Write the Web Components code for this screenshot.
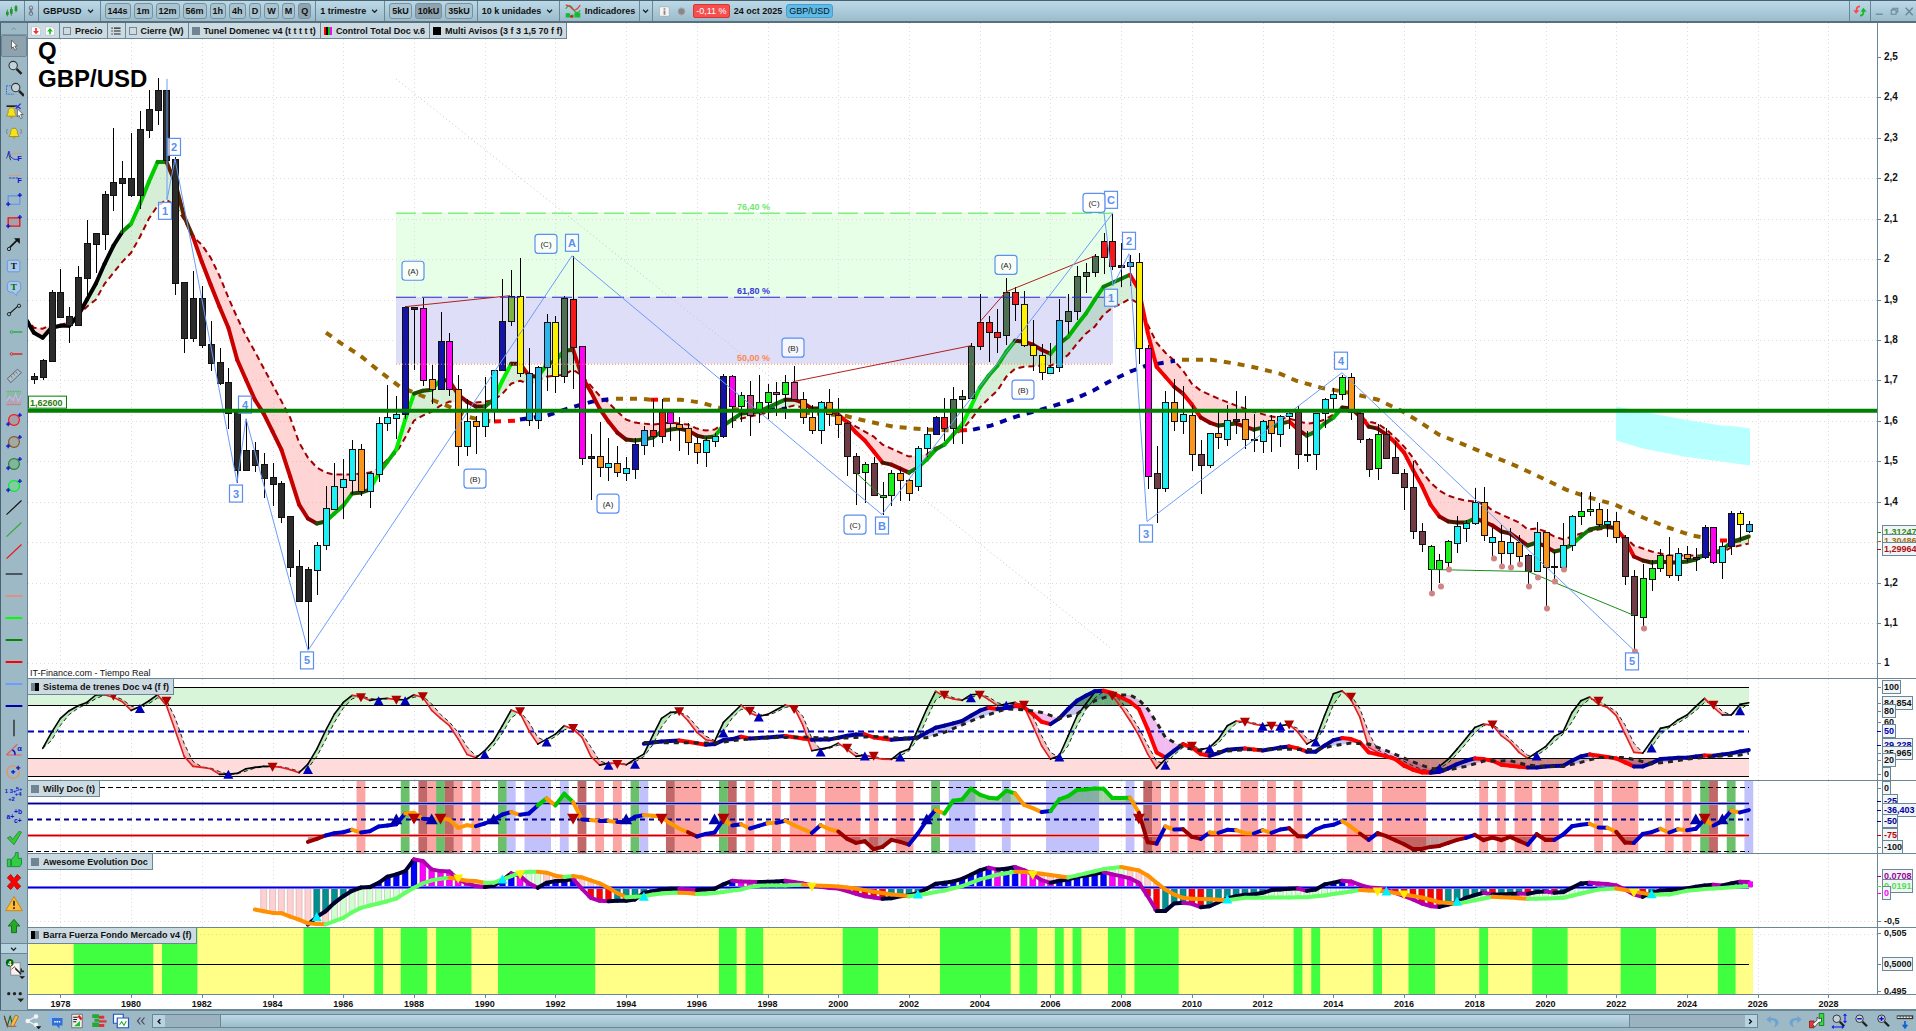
<!DOCTYPE html>
<html lang="es">
<head>
<meta charset="utf-8">
<title>GBP/USD - Q</title>
<style>
	html, body { height: 100%; margin: 0; }
	body {
		font: bold 9px/12px "Liberation Sans", Arial, sans-serif;
		color: #111;
		background: #9db9c6;
		overflow: hidden;
	}
</style>
</head>
<body>
<trade-workspace></trade-workspace>

<script>
// ---------- icons ----------
const magnifier = (x, y) => `<path d="M${x + 4} ${y + 4}l6 6" stroke="#222" stroke-width="3"/><circle cx="${x}" cy="${y}" r="5" fill="#c3d3db" stroke="#333" stroke-width="1.3"/>`;
const plus = (x, y) => `<path d="M${x - 2.5} ${y}h5M${x} ${y - 2.5}v5" stroke="#11c" stroke-width="1.5"/>`;
const ellipse = (c, f) => `<circle cx="12" cy="11" r="6.5" fill="${f}" stroke="${c}" stroke-width="1.4"/>${plus(19, 5)}${plus(5, 16)}`;
const slope = c => `<path d="M3 19L21 2" stroke="${c}" stroke-width="1.4"/>`;
const level = (c, w) => `<path d="M2 11H22" stroke="${c}" stroke-width="${w}"/>`;
const bell = `<path d="M12 4c-4 0-4 4-4 6l-2 4h12l-2-4c0-2 0-6-4-6z" fill="#f8e21c" stroke="#8a7a10" stroke-width=".8"/><path d="M10 15h4l-2 2z" fill="#b89c10"/>`;
const pointer = (x, y) => `<path d="M${x} ${y}v10l2-2 2 4 2-1-2-4h3z" fill="#fff" stroke="#555"/>`;

const ICONS = {
	cursor: pointer(9, 4),
	zoom: magnifier(11, 8),
	zoomArea: `<path d="M3 6h6M3 6v10h9" stroke="#16d" stroke-dasharray="2 1"/>${magnifier(14, 8)}`,
	alertDraw: `<path d="M3 4h11" stroke="#222" stroke-width="2"/><path d="M14 3l6 4M20 1l-6 6" stroke="#22c" stroke-width="1.4"/><g transform="translate(-3,2)">${bell}</g>${pointer(16, 7)}`,
	alert: `${bell}<path d="M4 5q-2 3 0 6M20 5q2 3 0 6" stroke="#777"/>`,
	fiboWave: `<path d="M5 7l3 9" stroke="#222"/><path d="M3 14l3-9 2 7 4 3h5" stroke="#22c"/><path d="M9 8h13" stroke="#f84" stroke-dasharray="2 1"/><text x="16" y="17" font-size="9" fill="#11c">F</text>`,
	fibo: `<path d="M6 8h14" stroke="#f84" stroke-dasharray="2 1"/><path d="M6 11h11" stroke="#22c" stroke-dasharray="3 1"/><text x="16" y="17" font-size="9" fill="#11c">F</text>`,
	rect: `<path d="M5 6h14v10H5z" stroke="#5b8ff0" stroke-width="1.3"/>${plus(19, 5)}${plus(5, 16)}`,
	rectRed: `<path d="M5 6h14v10H5z" fill="#a7a0a8" stroke="#e11" stroke-width="1.6"/>${plus(19, 5)}${plus(5, 16)}`,
	arrow: `<circle cx="6" cy="17" r="2" stroke="#111"/><path d="M7 15l9-9" stroke="#111" stroke-width="2"/><path d="M12 4h7v7z" fill="#111"/>`,
	text: `<rect x="4" y="4" width="15" height="14" rx="2" fill="#a9c9e4" stroke="#5b8ff0"/><text x="8" y="15" font-size="11" fill="#111" font-family="Liberation Serif">T</text>`,
	textBubble: `<path d="M8 3h8a4 4 0 0 1 4 4v5a5 5 0 0 1-4 4l-1 4-4-4H8a4 4 0 0 1-4-4V7a4 4 0 0 1 4-4z" fill="#a9c9e4" stroke="#5b8ff0"/><text x="8" y="14" font-size="11" fill="#060" font-family="Liberation Serif">T</text>`,
	segment: `<path d="M6 16L17 6" stroke="#111" stroke-width="1.4"/><circle cx="6" cy="16" r="2" fill="#9db9c6" stroke="#111"/><circle cx="18" cy="6" r="2" fill="#9db9c6" stroke="#111"/>`,
	rayGreen: `<circle cx="9" cy="11" r="1.6" stroke="#2a3"/><path d="M11 11h11" stroke="#2a3" stroke-width="1.6"/>`,
	rayRed: `<circle cx="9" cy="11" r="1.6" stroke="#e11"/><path d="M11 11h11" stroke="#e11" stroke-width="1.6"/>`,
	ruler: `<path d="M4 14L16 3l5 4L8 19z" fill="#b0bec5" stroke="#556"/><path d="M8 11l2 2M11 8l2 2M14 6l2 2" stroke="#556"/>`,
	channel: `<path d="M3 3h18v8H3z" fill="#8cb8a4"/><path d="M3 11h18v8H3z" fill="#b3a4b4"/><path d="M3 3h18" stroke="#4a4" stroke-dasharray="1 1"/><path d="M3 19h18" stroke="#d44" stroke-dasharray="1 1"/><path d="M3 15l4-6 4 5 3-8 3 9 4-8" stroke="#bbe" stroke-width="1.4"/>`,
	ellipseRed: ellipse('#f11', '#a7a0a8'),
	ellipseBrown: ellipse('#852', '#a3aaa4'),
	ellipseGreen: ellipse('#282', '#82b4a0'),
	ellipseLime: ellipse('#0e2', '#82cca4'),
	slopeBlack: slope('#111'), slopeGreen: slope('#3a3'), slopeRed: slope('#e11'),
	levelBlack: level('#111', 1.4), levelPink: level('#f08878', 2), levelLime: level('#0f0', 2.4), levelGreen: level('#080', 2.4),
	levelRed: level('#f00', 2.4), levelBlue: level('#6b9cff', 2.4), levelNavy: level('#00a', 2.4),
	vertical: `<path d="M12 1v20" stroke="#111" stroke-width="1.4"/>`,
	angle: `<path d="M3 17L16 4M3 17h18" stroke="#e55" stroke-width="1.3"/><path d="M10 11q4 2 3 6" stroke="#11c" stroke-width="1.8"/><text x="16" y="12" font-size="9" fill="#11c">α</text>`,
	circle: `<circle cx="11" cy="11" r="7.5" stroke="#f58a50" stroke-width="1.4"/>${plus(11, 11)}${plus(17, 6)}`,
	elliott5: `<path d="M3 14L8 5l3 12 5-14 4 7" stroke="#8ab4f8"/><text x="1" y="10" font-size="7" fill="#11c">1</text><text x="7" y="10" font-size="7" fill="#11c">3+</text><text x="14" y="7" font-size="7" fill="#11c">5+</text><text x="5" y="19" font-size="7" fill="#11c">+2</text><text x="13" y="14" font-size="7" fill="#11c">+4</text>`,
	elliott3: `<path d="M3 14L10 5l7 11" stroke="#8ab4f8"/><text x="3" y="15" font-size="8" fill="#11c">a+</text><text x="12" y="9" font-size="8" fill="#11c">+b</text><text x="12" y="19" font-size="8" fill="#11c">c+</text>`,
	check: `<path d="M4 11l4-2 2 4 8-10 3 1-9 15z" fill="#3c3" stroke="#283"/>`,
	thumb: `<path d="M4 10h4v9H4zM9 10l4-4 1-4h3v7h4v7l-2 3H9z" fill="#3c4" stroke="#183"/>`,
	cross: `<path d="M4 6l4-4 4 5 4-5 4 4-5 5 5 5-4 4-4-5-4 5-4-4 5-5z" fill="#f00" stroke="#a00"/>`,
	warn: `<path d="M12 2l10 17H2z" fill="#fb3" stroke="#c70"/><path d="M12 7v6M12 15v2" stroke="#222" stroke-width="2"/>`,
	up: `<path d="M12 3l7 8h-4v8H9v-8H5z" fill="#2a2" stroke="#161"/>`,
	down: `<path d="M9 17h6v5H9z" fill="#f00"/>`,
	config: `<path d="M8 5h10v13H8z" fill="#f4f4f4" stroke="#888"/><path d="M9 12l3-3 3 5" stroke="#c33"/><circle cx="7" cy="5" r="4" fill="#060"/><text x="5" y="8" font-size="7" fill="#fff">4</text><path d="M13 11l6 6M19 11v3h3" stroke="#222" stroke-width="1.6"/><path d="M17 19h6l-3 3z" fill="#111"/>`,
	more: `<g fill="#222"><circle cx="6" cy="8" r="1.7"/><circle cx="12" cy="8" r="1.7"/><circle cx="18" cy="8" r="1.7"/><path d="M15 13h7l-3.500 4z"/></g>`,
	draw: `<path d="M3 4l4 14 4-14 3 13" stroke="#262" stroke-width="1.5"/><path d="M3 7l5 11h11" stroke="#b22"/><path d="M12 15l6-12 4 2-6 12-4 2z" fill="#fb3" stroke="#863"/>`,
	share: `<path d="M5 11L16 5M5 11l11 6" stroke="#f4f4f4" stroke-width="1.6"/><g fill="#f4f4f4"><circle cx="5" cy="11" r="3"/><circle cx="16" cy="5" r="3"/><circle cx="16" cy="16" r="3"/></g><path d="M16 18h7l-3.500 4z" fill="#111"/>`,
	chat: `<path d="M3 2h13v9H8l-3 3v-3H3z" fill="#8db8e8"/><path d="M8 7h14v10h-4v4l-4-4H8z" fill="#2f6fd8"/><path d="M11 12h2M14 12h2M17 12h2" stroke="#fff" stroke-width="2"/>`,
	report: `<path d="M5 2h14v18H5z" fill="#eee" stroke="#555"/><path d="M7 6h6M7 9h5M7 12h4" stroke="#111" stroke-width="1.400"/><path d="M14 4l4 5" stroke="#e11" stroke-width="3"/><path d="M8 18l8-7v7z" fill="#2b3"/>`,
	depth: `<path d="M3 2h9v5H3zM6 8h6v4H6zM3 13h9v6H3z" fill="#2a3"/><path d="M12 4h7v4h-7zM12 10h10v3H12zM12 15h7v4h-7z" fill="#d33"/>`,
	windows: `<path d="M2 2h13v12H2z" fill="#fff" stroke="#25b" stroke-width="1.6"/><path d="M7 7h15v13H7z" fill="#fff" stroke="#25b" stroke-width="1.6"/><path d="M10 16l3-4 3 5 3-6" stroke="#2a3" stroke-width="1.400"/>`,
	undo: `<path d="M9 4L3 9l6 5v-4c6-1 8 4 4 10 9-4 9-13-4-13z" fill="#6fa3cf"/>`,
	redo: `<path d="M15 4l6 5-6 5v-4c-6-1-8 4-4 10-9-4-9-13 4-13z" fill="#6fa3cf"/>`,
	style: `<path d="M15 1h6v16h-6z" fill="#3d4" stroke="#161"/><path d="M2 11h6v9H2z" fill="#e33" stroke="#811"/><path d="M6 15l6-5V6l3 2 3-1v5l-4 1-5 6z" fill="#eee" stroke="#333"/>`,
	zoomFit: `${magnifier(9, 8)}<path d="M20 2v11M18 4l2-2 2 2M18 11l2 2 2-2M3 19h15M5 17l-2 2 2 2M16 17l2 2-2 2" stroke="#11e" stroke-width="1.4"/>`,
	zoomOut: `${magnifier(10, 8)}<path d="M7 8h6" stroke="#11c" stroke-width="2"/>`,
	zoomIn: `${magnifier(10, 8)}<path d="M7 8h6M10 5v6" stroke="#11c" stroke-width="2"/>`,
	rows: `<path d="M1 6h22" stroke="#333" stroke-width="5"/><path d="M2 6h20" stroke="#eee" stroke-width="2" stroke-dasharray="3 1"/><path d="M12 11v9M9 16l3 4 3-4" stroke="#16c" stroke-width="2.4"/>`,
	candles: `<path d="M5 9v10M11 5v13M18 2v11" stroke="#161"/><path d="M3 12h4v5H3zM9 8h4v7H9zM16 4h4v7h-4z" fill="#292"/>`,
	link: `<rect x="8" y="2" width="6" height="7" rx="2" stroke="#667" stroke-width="1.6"/><rect x="8" y="12" width="6" height="7" rx="2" stroke="#667" stroke-width="1.6"/><path d="M11 6v9" stroke="#667" stroke-width="2"/>`,
	waves: `<path d="M2 8q5-9 10 0t10 2" stroke="#2a3" stroke-width="1.6"/><path d="M2 3q5 0 9 5t11-5" stroke="#e33" stroke-width="1.6"/><path d="M2 14h6v6H2zM9 16h4v4H9zM14 13h8v7h-8z" fill="#1b3"/><path d="M8 17h4v3H8z" fill="#e11"/>`,
	sync: `<path d="M12 4q-6 0-5 7" stroke="#f44" stroke-width="2.6"/><path d="M2 10h9l-5 5z" fill="#f44"/><path d="M12 18q6 0 5-7" stroke="#1b2" stroke-width="2.6"/><path d="M13 12h9l-5-6z" fill="#1b2"/>`,
	minimize: `<path d="M5 16h13" stroke="#6b8795" stroke-width="2.4"/>`,
	restore: `<path d="M9 8V5h9v7h-3M6 8h9v8H6z" stroke="#6b8795" stroke-width="2"/>`,
	close: `<path d="M5 4l13 14M18 4L5 18" stroke="#6b8795" stroke-width="2.6"/>`,
	info: `<rect x="1" y="1" width="21" height="20" fill="#f4f4f4" stroke="#999"/><path d="M12 4v3M12 9v9" stroke="#888" stroke-width="4"/>`,
	dot: `<circle cx="12" cy="11" r="8" fill="#888" stroke="#b0b8bc" stroke-width="2"/>`,
	chevron: `<path d="M5 8l6 6 6-6" stroke="#222" stroke-width="3"/>`,
	chevronUp: `<path d="M6 13l5-5 5 5" stroke="#6b8795" stroke-width="2"/>`,
	left: `<path d="M14 6l-5 5 5 5" stroke="#111" stroke-width="3"/>`,
	right: `<path d="M9 6l5 5-5 5" stroke="#111" stroke-width="3"/>`,
	collapse: `<path d="M11 5l-5 6 5 6M18 5l-5 6 5 6" stroke="#445" stroke-width="2"/>`,
	list: `<path d="M1 4h3M1 11h3M1 18h3M7 4h16M7 11h16M7 18h16" stroke="#222" stroke-width="2.6"/>`,
	redDown: `<path d="M1 1h16l6 6v14H1z" fill="#fff" stroke="#89a"/><path d="M12 19l7-8h-5V4h-4v7H5z" fill="#e33"/>`,
	greenUp: `<path d="M1 1h16l6 6v14H1z" fill="#fff" stroke="#89a"/><path d="M12 4l7 8h-5v7h-4v-7H5z" fill="#2b2"/>`
};

class UiIcon extends HTMLElement {
	connectedCallback() {
		const root = this.shadowRoot || this.attachShadow({ mode: 'open' });
		root.innerHTML = `
			<style>
				:host { display: inline-flex; flex: none; width: var(--icon, 20px); height: var(--icon, 20px); }
				svg { width: 100%; height: 100%; font: bold 9px "Liberation Sans", Arial, sans-serif; }
			</style>
			<svg viewBox="0 0 24 22" fill="none" aria-hidden="true">${ICONS[this.getAttribute('name')] || ''}</svg>
		`;
	}
}
customElements.define('ui-icon', UiIcon);

// ---------- top bar ----------
class TopBar extends HTMLElement {
	constructor() {
		super();
		this.attachShadow({ mode: 'open' });
	}
	getStyles() {
		return `
			<style>
				:host {
					display: flex;
					flex: none;
					align-items: center;
					height: 23px;
					box-sizing: border-box;
					border-top: 1px solid #4a6270;
					border-bottom: 2px solid #56707d;
					background: linear-gradient(#bcd9e8, #9cbccb);
					--icon: 16px;
				}
				button {
					font: inherit;
					color: inherit;
					margin: 0;
					padding: 0;
					border: 0;
					background: none;
					display: flex;
					align-items: center;
					white-space: nowrap;
				}
				.group {
					display: flex;
					align-items: center;
					height: 100%;
					gap: 3px;
					padding: 0 4px;
					border-right: 1px solid #6b8795;
				}
				.key {
					height: 16px;
					padding: 0 2px;
					border: 1px solid #7592a0;
					border-radius: 3px;
					background: #a9c4d0;
				}
				.key.on { background: #8fa3ae; }
				.drop { gap: 4px; --icon: 10px; }
				.badge {
					padding: 0 2px;
					border: 1px solid #d33;
					border-radius: 2px;
					background: #f55050;
					color: #fff;
					font-weight: normal;
				}
				.pair {
					padding: 0 2px;
					border: 1px solid #4d9cc8;
					border-radius: 3px;
					background: #5cbbe8;
					font-weight: normal;
				}
				.status { display: flex; align-items: center; gap: 4px; padding: 0 6px; }
				.status ui-icon { --icon: 11px; margin-right: 2px; }
				.window { margin-left: auto; display: flex; align-items: center; height: 100%; gap: 2px; border-left: 1px solid #6b8795; }
				.window .group { padding: 0 2px; }
				.window > button { --icon: 13px; }
			</style>
		`;
	}
	connectedCallback() {
		const keys = (list, on) => list.map(k => `<button class="key${k === on ? ' on' : ''}">${k}</button>`).join('');
		this.shadowRoot.innerHTML = `
			${this.getStyles()}
			<div class="group"><button aria-label="Velas"><ui-icon name="candles"></ui-icon></button></div>
			<div class="group" style="padding:0"><button aria-label="Vincular"><ui-icon name="link" style="width:13px"></ui-icon></button></div>
			<div class="group"><button class="drop">GBPUSD <ui-icon name="chevron"></ui-icon></button></div>
			<div class="group">${keys(['144s', '1m', '12m', '56m', '1h', '4h', 'D', 'W', 'M', 'Q'], 'Q')}</div>
			<div class="group"><button class="drop">1 trimestre <ui-icon name="chevron"></ui-icon></button></div>
			<div class="group">${keys(['5kU', '10kU', '35kU'], '10kU')}</div>
			<div class="group"><button class="drop">10 k unidades <ui-icon name="chevron"></ui-icon></button></div>
			<div class="group"><button><ui-icon name="waves" style="width:18px"></ui-icon>&nbsp;Indicadores</button></div>
			<div class="group" style="padding:0 1px"><button class="drop" aria-label="Más indicadores"><ui-icon name="chevron"></ui-icon></button></div>
			<div class="status">
				<ui-icon name="info"></ui-icon><ui-icon name="dot"></ui-icon>
				<span class="badge">-0,11 %</span><span>24 oct 2025</span><span class="pair">GBP/USD</span>
			</div>
			<div class="window">
				<div class="group"><button aria-label="Sincronizar"><ui-icon name="sync"></ui-icon></button></div>
				<button aria-label="Minimizar"><ui-icon name="minimize"></ui-icon></button>
				<button aria-label="Restaurar"><ui-icon name="restore"></ui-icon></button>
				<button aria-label="Cerrar"><ui-icon name="close"></ui-icon></button>
			</div>
		`;
	}
}
customElements.define('top-bar', TopBar);

// ---------- drawing tools on the left ----------
const TOOLS = ['cursor', 'zoom', 'zoomArea', 'alertDraw', 'alert', 'fiboWave', 'fibo', 'rect', 'rectRed', 'arrow', 'text', 'textBubble',
	'segment', 'rayGreen', 'rayRed', 'ruler', 'channel', 'ellipseRed', 'ellipseBrown', 'ellipseGreen', 'ellipseLime', 'slopeBlack',
	'slopeGreen', 'slopeRed', 'levelBlack', 'levelPink', 'levelLime', 'levelGreen', 'levelRed', 'levelBlue', 'levelNavy', 'vertical',
	'angle', 'circle', 'elliott5', 'elliott3', 'check', 'thumb', 'cross', 'warn', 'up', 'down'];

class ToolRail extends HTMLElement {
	connectedCallback() {
		this.attachShadow({ mode: 'open' }).innerHTML = `
			<style>
				:host {
					display: flex;
					flex-direction: column;
					width: 28px;
					box-sizing: border-box;
					border-left: 1px solid #4a6270;
					border-right: 1px solid #6b8795;
					background: #9db9c6;
				}
				button {
					flex: none;
					margin: 0;
					padding: 0;
					border: 0;
					background: none;
					display: flex;
					align-items: center;
					justify-content: center;
					width: 100%;
				}
				.fold { height: 12px; border-bottom: 1px solid #7b98a6; --icon: 10px; }
				.tools { flex: 1; min-height: 0; overflow: hidden; }
				.tools button { height: 22px; box-sizing: border-box; }
				.tools button:first-child { border: 1px solid #6b8795; border-radius: 2px; background: #8fa3ae; }
				.next { height: 11px; background: #b7d3e0; border: solid #6b8795; border-width: 1px 0; box-sizing: border-box; --icon: 10px; }
				.big { height: 28px; --icon: 23px; }
			</style>
			<button class="fold" aria-label="Plegar"><ui-icon name="chevronUp"></ui-icon></button>
			<div class="tools">${TOOLS.map(t => `<button aria-label="${t}"><ui-icon name="${t}"></ui-icon></button>`).join('')}</div>
			<button class="next" aria-label="Siguiente"><ui-icon name="chevron"></ui-icon></button>
			<button class="big" aria-label="Configurar"><ui-icon name="config"></ui-icon></button>
			<button class="big" aria-label="Más"><ui-icon name="more"></ui-icon></button>
		`;
	}
}
customElements.define('tool-rail', ToolRail);

// ---------- bottom bar ----------
class BottomBar extends HTMLElement {
	connectedCallback() {
		const btn = n => `<button aria-label="${n}"><ui-icon name="${n}"></ui-icon></button>`;
		this.attachShadow({ mode: 'open' }).innerHTML = `
			<style>
				:host { display: flex; flex: none; align-items: center; height: 21px; background: #9db9c6; border-top: 1px solid #6b8795; box-sizing: border-box; --icon: 18px; }
				button { flex: none; box-sizing: border-box; width: 22px; height: 20px; margin: 0; padding: 0; border: 0; background: none; display: flex; align-items: center; justify-content: center; }
				button:first-child { width: 28px; background: #8fa3ae; }
				.fold { width: 18px; margin-right: 2px; --icon: 14px; }
				.scroll { flex: 1; display: flex; height: 12px; margin-right: 4px; border: 1px solid #6b8795; --icon: 11px; }
				.scroll button, .scroll button:first-child { width: 12px; height: 100%; background: #b7d3e0; }
				.scroll span { background: #9bb3c0; }
				.scroll .thumb { background: linear-gradient(#bcd9e8, #9cbccb); border: solid #6b8795; border-width: 0 1px; }
			</style>
			${['draw', 'share', 'chat', 'report', 'depth', 'windows'].map(btn).join('')}
			<button class="fold" aria-label="Plegar"><ui-icon name="collapse"></ui-icon></button>
			<div class="scroll">
				${btn('left')}
				<span style="flex:55"></span><span class="thumb" style="flex:1420"></span><span style="flex:116"></span>
				${btn('right')}
			</div>
			${['undo', 'redo', 'style', 'zoomFit', 'zoomOut', 'zoomIn', 'rows'].map(btn).join('')}
		`;
	}
}
customElements.define('bottom-bar', BottomBar);

// ---------- data ----------
// one candle a quarter, first one is three quarters before 1978: colour, high, open/close top, open/close bottom, low
const CANDLES = `
k373,376,379,384 k359,360,377,380 k290,292,361,361
k269,292,317,318 k307,316,325,343 k266,277,325,325 k220,243,278,302
k233,233,244,273 k191,194,234,250 k128,182,195,211 k161,178,183,235
k133,178,195,197 k111,129,195,209 k90,109,130,138 k78,90,110,125
k90,90,160,161 k157,159,283,295 k282,282,338,353 k271,298,338,342
k286,298,345,348 k321,344,363,371 k348,362,383,385 k368,382,413,429
k412,412,470,483 k419,450,470,470 k442,450,465,472 k453,464,478,498
k463,477,484,506 k481,483,517,523 k516,516,568,578 k550,567,602,603
k568,570,602,650 c542,545,571,596 c486,508,545,550 c463,486,509,509
c459,479,487,519 c440,449,480,494 o444,449,491,496 c472,473,491,508
c417,423,474,482 c385,417,423,431 c396,414,418,439 b306,307,414,419
k307,307,309,370 m298,308,380,386 o365,379,389,404 b312,341,389,389
m333,341,389,396 o375,389,446,466 c399,421,446,456 o416,421,426,454
c377,411,426,437 c370,370,411,422 b279,321,370,370 n270,296,321,326
y258,296,373,377 s348,373,420,426 s366,367,420,429 s314,322,367,391
y316,322,376,393 d296,298,376,383 r256,299,347,389 m346,346,458,465
k434,456,458,500 o422,456,467,477 c438,463,467,481 o446,463,472,477
c457,468,473,481 b438,444,469,479 s426,430,445,455 r399,430,436,447
r399,412,436,443 m412,412,423,441 o417,424,428,451 o423,428,442,455
o437,443,452,464 c437,440,452,467 c433,436,441,447 b374,376,436,438
m375,376,406,428 g392,395,406,422 p381,395,415,436 g375,402,412,423
g384,392,402,419 p382,392,394,416 g375,382,394,419 p366,382,399,400
o392,399,417,424 o405,417,430,434 c401,402,430,444 o389,402,414,426
o398,415,424,438 w422,423,456,476 w453,456,473,505 g462,464,472,503
w457,463,495,496 g482,495,497,515 g470,473,495,506 o468,473,480,501
o479,480,493,501 c446,448,486,491 c427,434,448,457 b416,417,434,434
r398,417,428,441 d387,399,428,444 d390,396,399,444 d343,346,398,398
r294,322,346,350 r316,322,332,362 r309,332,337,353 d278,292,335,345
r287,292,304,321 y291,304,345,347 y320,345,355,371 y344,355,372,380
c343,367,373,374 s299,320,367,372 d294,311,321,334 d266,276,311,320
d263,272,276,293 d254,256,272,277 r233,241,257,274 r213,241,266,270
k243,265,267,287 s255,262,266,286 y253,262,348,364 m345,348,476,489
w446,473,488,523 c391,402,488,492 o379,402,421,431 c386,414,421,434
o405,415,454,471 w440,454,465,494 c433,433,465,468 o412,433,437,449
c405,420,439,446 k391,419,421,434 o396,419,439,449 k414,439,440,452
c420,421,441,453 o415,420,433,452 c415,416,434,447 c412,413,416,429
w406,412,454,469 k431,454,455,462 c413,413,454,470 c398,399,413,428
c388,394,398,409 g375,377,394,400 o373,377,412,420 w411,413,439,443
w438,439,469,477 g424,434,468,480 w428,434,458,458 w441,457,473,474
w469,473,487,510 w461,487,531,539 w523,531,544,552 g545,546,570,592
g554,560,570,584 g540,541,562,570 c516,526,543,553 c520,523,528,542
c488,502,523,525 o487,502,535,541 c528,537,542,557 o525,541,553,566
c528,542,553,567 o535,542,556,563 w554,555,572,586 c522,532,572,573
o532,532,568,607 k552,567,568,581 c523,545,568,569 c515,516,545,551
g492,511,516,525 g492,509,511,516 o503,509,524,527 c509,521,524,537
o512,521,537,543 w535,537,577,586 w571,577,616,651 g565,579,618,627
g560,569,580,592 g549,555,569,573 o537,555,576,579 c548,553,576,582
o546,554,558,563 k548,557,559,572 b525,527,557,559 m527,527,563,565
c542,546,563,580 b511,513,546,555 y511,513,524,540 s521,524,531,533`
	.trim().split(/\s+/).map(t => [t[0]].concat(t.slice(1).split(',').map(Number)));

const CANDLE_COLOURS = { k: '#2b2b2b', c: '#1ff0f5', o: '#f8961c', b: '#1414a8', m: '#ff00f0', n: '#7cb342', y: '#fff200', s: '#2db4ea',
	d: '#4f6f52', r: '#f51a1a', g: '#1af01a', p: '#cf4588', w: '#6f3b45' };

// "quarter:value" keys, missing quarters are filled in by interpolation
const series = text => {
	const keys = text.trim().split(/\s+/).map(t => t.split(':').map(Number));
	const out = [];
	for (let i = 0; i < keys.length - 1; i++) {
		const [a, va] = keys[i], [b, vb] = keys[i + 1];
		for (let q = a; q < b; q++) out.push([q, va + (vb - va) * (q - a) / (b - a)]);
	}
	out.push(keys[keys.length - 1]);
	return out;
};
// plain run of values, one for each quarter
const run = (from, text) => text.trim().split(/\s+/).map((v, i) => [from + i, Number(v)]);

const FAST = run(-4, `318 333 338 328 326 326 316 300 284 264 246 232 224 204 182 162 162 183 217 237 262 285 307 328 360 380 400 414 432 450
	477 505 519 524 522 514 506 494 493 490 474 462 450 420 394 391 390 380 381 395 402 407 407 400 381 364 364 376 377 365 361 351 350
	377 392 409 422 433 440 441 440 438 432 430 429 431 436 438 437 426 420 414 413 412 408 404 400 400 403 409 409 409 415 423 433 441
	452 463 465 469 473 468 460 450 445 435 425 407 388 376 366 352 341 342 345 350 354 344 337 325 314 300 287 283 279 275 290 333 367
	377 387 394 405 418 423 426 425 424 427 430 428 428 424 422 430 436 432 424 418 408 409 415 427 429 435 443 453 470 486 505 517 522
	523 523 519 522 526 532 534 540 546 543 547 552 550 545 537 530 528 527 529 540 557 561 563 562 563 563 562 560 555 554 550 543 540 537`);

const SLOW = series(`-4:318 -3:328 -2:329 -1:325 0:325 1:323 2:316 3:307 4:300 5:284 6:273 7:262 8:253 9:237 10:219 11:206 12:200 13:206 14:220
	15:237 16:245 17:258 18:276 19:298 20:318 21:336 22:352 24:385 26:418 27:443 28:458 29:468 30:473 31:475 33:475 35:473 36:469 37:460 38:453
	39:438 40:421 41:416 42:412 43:406 44:402 45:403 47:403 49:401 50:394 51:384 52:381 53:384 55:377 57:375 58:370 59:376 60:386 61:396 62:403
	63:412 64:420 65:423 67:425 69:423 71:425 72:429 73:431 74:430 75:424 76:421 78:417 80:413 82:408 83:406 84:408 86:412 88:416 89:421 90:427
	92:437 93:445 95:453 96:457 98:455 99:448 100:446 101:436 102:430 103:420 104:408 105:399 106:391 107:377 108:369 109:367 111:366 112:366
	113:362 114:355 115:344 116:334 117:327 118:315 119:308 120:304 121:299 122:304 123:325 124:343 125:353 126:361 127:371 128:384 129:391
	131:399 133:406 135:412 137:417 139:419 141:424 142:423 143:420 144:415 145:408 146:410 147:418 148:422 149:424 150:430 151:438 152:447
	153:458 154:472 155:483 156:491 157:496 158:499 159:501 160:502 161:504 162:511 163:515 165:523 166:530 167:529 168:532 169:537 170:540
	171:537 172:534 174:530 176:528 177:538 178:546 179:549 180:552 182:556 186:556 188:553 189:548 190:546 191:544`);

const LONG = [
	['#996600', '326,333 343,345 359,355 380,372 400,387 424,397 449,407 467,417 484,421 494,422'],
	['#f00', '494,422 516,421'],
	['#00009c', '520,420 547,416 571,408 592,402 612,399'],
	['#996600', '616,399 640,399 651,400'],
	['#f00', '651,400 660,400'],
	['#996600', '663,400 681,400 701,403 722,409 742,410'],
	['#00009c', '754,411 787,409'],
	['#996600', '803,413 820,414 844,416 869,422 893,427 926,430 960,431'],
	['#f00', '960,431 970,430'],
	['#00009c', '973,430 991,426 1016,417 1048,408 1073,400 1093,391 1109,382 1130,372 1146,366 1175,361'],
	['#996600', '1182,360 1211,360 1236,364 1256,368 1280,374 1296,381 1321,388 1349,393 1378,400 1403,412 1419,422 1439,435 1464,445 1488,455 1513,465 1537,476 1566,490 1586,497 1615,505 1643,518 1668,528 1692,536 1709,539'],
	['#f00', '1720,541 1732,541'],
	['#996600', '1734,541 1749,541']
];

const TRAIN = run(-2, `208 160 118 95 80 70 48 47 55 68 94 82 66 47 80 155 232 262 265 269 286 285 283 269 265 262 262 265 272 281 255 210 155
	105 70 49 52 64 60 58 62 62 47 55 94 118 140 180 226 236 215 185 140 93 103 155 195 180 165 140 150 175 232 258 252 253 257 240 225
	170 118 100 98 125 160 182 187 130 104 78 102 112 106 92 78 85 140 215 210 205 192 212 232 228 236 240 241 220 210 150 90 37 52 60
	64 47 45 62 80 75 70 82 140 200 240 230 170 110 75 40 35 50 85 125 170 225 268 240 215 195 205 212 205 180 140 126 128 135 140 138
	140 136 160 195 180 110 44 35 62 115 205 220 230 240 253 268 274 275 262 240 210 178 145 135 138 170 190 220 238 220 203 172 158
	100 65 54 76 85 110 165 220 222 185 148 142 122 108 82 58 85 108 108 76 71`);

const TREND = series(`66:194 68:187 70:184 71:188 73:197 74:195 75:183 76:180 77:173 78:178 80:175 82:171 84:178 85:182 87:181 88:176 89:170
	90:166 91:166 92:175 94:182 95:180 96:178 97:175 98:160 99:146 101:133 102:126 103:110 104:95 105:86 106:90 107:87 108:80 109:85 110:105
	111:128 112:135 113:118 114:90 115:65 116:50 117:37 118:35 119:42 120:55 121:68 122:90 123:150 124:220 125:235 126:215 127:195 128:205
	129:225 130:230 131:222 132:212 134:208 136:214 137:210 138:205 139:202 140:208 141:218 142:218 143:200 144:183 145:177 146:180 147:190
	148:220 149:226 150:232 151:240 152:260 153:272 154:280 155:281 156:278 157:268 158:255 159:245 160:238 161:240 162:245 163:257 164:260
	165:263 166:265 167:265 168:262 170:260 171:245 172:232 173:226 174:230 175:234 176:238 177:250 178:262 179:262 180:252 181:240 183:236
	184:236 185:232 186:229 187:230 188:226 189:223 190:217 191:213`);

const TREND_AVG = series(`66:190 74:192 77:182 80:176 84:174 88:178 92:172 95:177 98:176 100:160 104:115 107:90 109:92 111:100 113:118 115:105
	117:65 119:48 121:48 122:62 123:90 124:130 125:175 127:205 130:220 134:212 138:210 142:212 144:200 146:192 148:195 150:215 153:248 155:268
	157:272 159:262 161:246 164:245 166:258 168:262 170:262 172:250 174:235 177:235 180:254 182:248 184:240 187:232 190:228 191:222`);

// value and colour of the stretch that ends there
const WILLY = `487r 478r 468r 461b 458b 451b 459o 455b 441b 438b 434b 402b 400o 418o 420b 418o 420o 445o 437o 440o 432b 421b 405b 398b 406o 402b
	378b 357g 378o 343g 368g 420o 422b 425o 425b 428o 428b 412b 407b 409o 412o 432o 447o 458o 471r 463b 459b 420b 438o 434b 447o 439b 431b
	430o 424b 437o 449o 460o 437b 449o 456o 478r 490r 485r 509r 502r 481r 487r 495r 462b 423b 391b 402o 364g 360g 328g 346g 355g 357g 334g
	342g 376o 386o 398o 395b 360g 350g 332g 330g 327g 328g 356g 356g 355g 400o 488r 492r 441b 450o 449b 472r 478r 459b 460o 451b 452b 461o
	462o 452b 460o 450b 446b 470r 471r 450b 440b 436b 425b 442o 462o 481r 461b 470r 482r 494r 508r 508r 502r 499r 490r 481r 475r 466b 482r
	474r 482r 472r 484r 495r 464b 481r 481r 465b 440b 436b 433b 444o 445b 457o 489r 490r 463b 458b 448b 459o 449b 452o 448b 420b 438o 425b
	394b 399o 392b`.trim().split(/\s+/).map((t, i) => [28 + i, parseInt(t), t.slice(-1)]);

const WILLY_BANDS = [
	['#fca5a5', '34 42 45 47 61 63 70-72 78 81 83-85 87-90 92 95-96 124 126 128-129 131 134-135 137 140 146-148 150-154 161 163 165-166 168-169 174 176-178 182 184'],
	['#6bc06b', '39 43 50 65 75 99 186 189'],
	['#c26868', '41 44 59 69 76 123 187'],
	['#c1c1fb', '51 53-55 57 66 101-103 107 112-117 121 191']
];
const FORCE_BANDS = [['#40ff40', '2-10 12-15 28-30 36 39-41 43-46 50-60 75-76 78-79 89-92 100-107 109-110 113 115 119-120 122-126 140 142 149 153-155 161 167-170 177-180 188-189']];

const AO = run(28, `735 712 695 670 650 634 624 623 610 592 585 575 540 545 570 575 576 600 612 620 623 618 603 582 590 612 625 610 605 604
	598 628 655 664 665 664 664 660 640 636 630 628 628 630 632 630 628 615 604 606 607 608 607 606 604 608 612 617 622 626 627 635 643 650
	654 658 656 650 648 640 628 613 610 606 598 586 573 565 570 568 563 572 585 602 610 604 600 593 588 584 578 585 590 597 610 650 694 694
	672 670 673 683 680 668 657 650 646 645 640 632 630 628 627 634 630 615 610 604 606 616 624 626 630 640 650 660 672 680 682 675 668 655
	647 640 645 645 644 642 643 638 636 640 638 625 612 610 612 614 618 630 645 652 640 633 632 630 627 622 618 616 618 612 607 608`);

const AO_AVG = series(`22:690 23:695 24:700 25:701 26:711 27:720 28:731 29:733 30:734 31:725 32:715 33:698 34:685 35:678 36:672 37:665 38:657
	39:640 40:625 41:612 42:603 43:598 44:595 45:599 46:604 47:605 48:610 49:610 50:600 51:590 52:580 53:577 54:577 55:580 56:589 57:593 58:590
	59:594 60:603 61:612 62:625 63:641 64:653 65:652 66:650 67:645 68:642 69:641 70:640 71:641 72:644 73:643 75:638 76:633 77:630 78:623 79:619
	80:618 82:618 84:616 86:619 88:621 90:627 92:637 94:645 96:650 98:643 100:633 102:620 104:600 106:586 108:577 110:579 112:587 114:594
	116:582 118:569 120:563 122:573 123:588 124:610 125:630 126:645 127:655 128:658 130:659 132:662 134:655 139:654 141:653 143:648 145:640
	147:632 149:634 150:636 152:645 154:654 156:668 158:673 160:662 162:652 164:654 166:658 168:657 170:655 172:642 174:630 176:627 178:636
	180:646 182:645 184:634 186:629 188:626 190:621 191:620`);

// ---------- panes ----------
const AXIS = 39;
const GREY = '#6b8795';
const GRID = 'stroke="#dcdcdc" stroke-dasharray="1 3"';

class ChartPane extends HTMLElement {
	constructor() {
		super();
		this.attachShadow({ mode: 'open' });
		this.top = 0;
		this.bottom = 100;
		this.grow = 100;
	}
	connectedCallback() {
		this.shadowRoot.innerHTML = `
			<style>
				:host { display: block; position: relative; flex: ${this.grow} 1 0; min-height: 0; overflow: hidden; background: #fff; border-bottom: 1px solid ${GREY}; box-sizing: border-box; }
				svg { position: absolute; inset: 0; width: 100%; height: 100%; font: bold 9px "Liberation Sans", Arial, sans-serif; }
				.tabs { position: absolute; left: 0; top: 0; display: flex; background: #ccdae1; border: solid ${GREY}; border-width: 0 1px 1px 0; }
			</style>
			<svg></svg>
			<div class="tabs"><slot></slot></div>
		`;
		new ResizeObserver(() => this.render()).observe(this);
		this.render();
	}
	render() {
		const box = this.getBoundingClientRect();
		if (!box.width) return;
		this.plot = box.width - AXIS;
		this.sx = this.plot / 1849;
		this.sy = box.height / (this.bottom - this.top);
		this.shadowRoot.querySelector('svg').innerHTML = this.grid() + this.draw() + `<rect x="${this.plot}" y="0" width="${AXIS}" height="100%" fill="#fff"/><path d="M${this.plot + .5} 0V2000" stroke="${GREY}"/>` + this.axis();
	}
	// quarter, page and value coordinates
	qx(q) { return (32.4 + 8.84 * q) * this.sx; }
	px(x) { return (x - 28) * this.sx; }
	y(v) { return (v - this.top) * this.sy; }

	path(points, attrs) {
		return `<path fill="none" ${attrs} d="M${points.map(p => this.qx(p[0]).toFixed(1) + ' ' + this.y(p[1]).toFixed(1)).join('L')}"/>`;
	}
	poly(text, attrs) {
		return `<polyline fill="none" ${attrs} points="${text.split(' ').map(t => t.split(',')).map(p => this.px(p[0]).toFixed(1) + ',' + this.y(p[1]).toFixed(1)).join(' ')}"/>`;
	}
	hline(v, attrs, x2) {
		return `<path d="M0 ${Math.round(this.y(v)) + .5}H${x2 || this.px(1749)}" ${attrs}/>`;
	}
	// fills between two series, one quarter at a time, with a colour for each side
	between(a, b, above, below) {
		const other = new Map(b);
		let out = '';
		for (let i = 1; i < a.length; i++) {
			const [q0, a0] = a[i - 1], [q1, a1] = a[i];
			const b0 = other.get(q0), b1 = other.get(q1);
			if (b0 === undefined || b1 === undefined) continue;
			const fill = a0 + a1 < b0 + b1 ? above : below;
			out += `<path d="M${this.qx(q0).toFixed(1)} ${this.y(a0).toFixed(1)}L${this.qx(q1).toFixed(1)} ${this.y(a1).toFixed(1)}V${this.y(b1).toFixed(1)}L${this.qx(q0).toFixed(1)} ${this.y(b0).toFixed(1)}z" fill="${fill}"/>`;
		}
		return out;
	}
	segments(s, width, colour) {
		let out = '';
		for (let i = 1; i < s.length; i++) out += this.path([s[i - 1], s[i]], `stroke="${colour(s[i], s[i - 1], i)}" stroke-width="${width}" stroke-linecap="round"`);
		return out;
	}
	bands(list) {
		return list.map(([fill, text]) => text.split(' ').map(t => {
			const [a, b = a] = t.split('-').map(Number);
			return `<rect x="${this.qx(a - .5)}" y="0" width="${this.qx(b + .5) - this.qx(a - .5)}" height="100%" fill="${fill}"/>`;
		}).join('')).join('');
	}
	marks(text, fill, up, r) {
		return text.split(' ').map(t => {
			const [q, v] = t.split(',').map(Number);
			const x = this.qx(q), y = this.y(v), s = up ? 1 : -1;
			return `<path d="M${x - r} ${y + r * s * .8}h${2 * r}L${x} ${y - r * s}z" fill="${fill}"/>`;
		}).join('');
	}
	grid() {
		let out = '';
		for (let q = 0; q <= 200; q += 8) out += `<path d="M${Math.round(this.qx(q)) + .5} 0V2000" ${GRID}/>`;
		return out;
	}
	tag(v, text, colour, boxed) {
		const y = this.y(v), x = this.plot;
		const width = text.length * 5 + (text.includes(',') || text.includes('-') ? 0 : 3);
		return `<path d="M${x} ${Math.round(y) + .5}h4" stroke="${colour === '#111' ? GREY : colour}"/>` +
			(boxed ? `<rect x="${x + 5.5}" y="${Math.round(y) - 6.5}" width="${width}" height="13" fill="#f1f5f7" stroke="${GREY}"/>` : '') +
			`<text x="${x + 7}" y="${y + 3}" fill="${colour}">${text}</text>`;
	}
	draw() { return ''; }
	axis() { return ''; }
}

class PricePane extends ChartPane {
	constructor() {
		super();
		this.top = 23;
		this.bottom = 680;
		this.grow = 1977;
	}
	grid() {
		let out = super.grid();
		for (let i = 0; i < 15; i++) out += this.hline(664 - i * 40.46, GRID, this.plot);
		return out;
	}
	candle([c, high, top, bottom, low], i) {
		const x = Math.round(this.qx(i - 3)), y = v => Math.round(this.y(v));
		return `<path d="M${x + .5} ${y(high)}V${y(low)}" stroke="#000"/>` +
			`<rect x="${x - 2.5}" y="${y(top) + .5}" width="6" height="${Math.max(1, y(bottom) - y(top))}" fill="${CANDLE_COLOURS[c]}" stroke="#111"/>`;
	}
	label(x, y, text) {
		const small = text.length > 1;
		const w = small ? 22 : 13, h = small ? 19 : 17;
		return `<rect x="${this.px(x) - w / 2}" y="${this.y(y) - h / 2}" width="${w}" height="${h}" rx="${small ? 3 : 0}" fill="#fff" fill-opacity=".7" stroke="#5b8ff0" stroke-width="1.2"/>` +
			`<text x="${this.px(x)}" y="${this.y(y) + (small ? 3 : 4)}" text-anchor="middle" fill="${small ? '#222' : '#5b8ff0'}" font-size="${small ? 8 : 11}" font-weight="${small ? 400 : 700}">${text}</text>`;
	}
	maColour(a, b) {
		if (a[0] < 8) return '#000';
		const s = b[1] - a[1];
		if (a[0] < 13) return s > 14 ? '#00cc00' : '#009000';
		if (a[0] < 16) return '#5a2400';
		if (s > 14) return '#00f000';
		if (s > 7) return '#00b400';
		if (s > 3) return '#0a7a0a';
		if (s > 0) return '#1f4a00';
		if (s > -3) return '#451800';
		if (s > -8) return '#8a0000';
		if (s > -20) return a[0] > 120 || (a[0] > 88 && a[0] < 96) ? '#f00000' : '#b80000';
		return a[0] > 120 ? '#ff0000' : '#c80000';
	}
	draw() {
		const x1 = this.px(396), x2 = this.px(1113), fw = x2 - x1, y = v => this.y(v);
		const fib = `
			<rect x="${x1}" y="${y(213)}" width="${fw}" height="${y(297) - y(213)}" fill="#e7fee7"/>
			<rect x="${x1}" y="${y(297)}" width="${fw}" height="${y(364) - y(297)}" fill="#dedef8"/>`;
		const fibLines = `
			<path d="M${x1} ${y(213.5)}H${x2}" stroke="#7df07d" stroke-width="1.4" stroke-dasharray="20 6"/>
			<path d="M${x1} ${y(297.5)}H${x2}" stroke="#2a2ad0" stroke-width="1.2" stroke-dasharray="20 6"/>
			<path d="M${x1} ${y(364.5)}H${x2}" stroke="#ff7f40" stroke-dasharray="1 2"/>
			<text x="${this.px(737)}" y="${y(210)}" fill="#6fe86f">76,40 %</text>
			<text x="${this.px(737)}" y="${y(294)}" fill="#3a3ad8">61,80 %</text>
			<text x="${this.px(737)}" y="${y(361)}" fill="#ff8850">50,00 %</text>`;
		const dots = '1432,594 1441,587 1449,570 1494,559 1502,567 1511,568 1520,565 1529,587 1538,578 1547,609 1555,582 1564,570 1635,652 1644,629'
			.split(' ').map(t => t.split(',')).map(p => `<circle cx="${this.px(p[0])}" cy="${y(p[1])}" r="3" fill="#d08484"/>`).join('');
		const labels = [[174, 147, '2'], [165, 211, '1'], [236, 494, '3'], [245, 405, '4'], [307, 661, '5'], [572, 243, 'A'], [1111, 200, 'C'],
			[1129, 241, '2'], [1111, 298, '1'], [882, 526, 'B'], [1146, 534, '3'], [1341, 361, '4'], [1632, 662, '5'],
			[413, 271, '(A)'], [546, 244, '(C)'], [1006, 265, '(A)'], [1094, 203, '(C)'], [475, 479, '(B)'], [608, 504, '(A)'],
			[793, 348, '(B)'], [1023, 390, '(B)'], [855, 525, '(C)']].map(l => this.label(...l)).join('');
		const blue = 'stroke="#6b9cf8" stroke-width="1"';
		return fib + this.grid() +
			this.poly('396,79 1110,648', 'stroke="#c4c4c4" stroke-dasharray="1 3"') +
			this.poly('1616,407 1647,413 1684,420 1721,426 1737,427 1750,429 1750,466 1721,462 1684,457 1643,449 1616,441', 'style="fill:#b8ffff"') +
			this.between(FAST, SLOW, 'rgba(120,200,120,.3)', 'rgba(255,120,120,.32)') +
			this.path(SLOW, 'stroke="#a00000" stroke-width="2" stroke-dasharray="6 4"') +
			LONG.map(([c, p]) => this.poly(p, `stroke="${c}" stroke-width="4" stroke-dasharray="7 7"`)).join('') +
			this.segments(FAST, 4, (a, b) => this.maColour(a, b)) +
			CANDLES.map((c, i) => this.candle(c, i)).join('') +
			fibLines +
			this.poly('405,307 510,296', 'stroke="#b02020"') + this.poly('793,382 971,346', 'stroke="#b02020"') +
			this.poly('980,322 1006,292 1095,256', 'stroke="#b02020"') +
			this.poly('856,473 882,497', 'stroke="#189018"') + this.poly('1431,570 1528,572 1634,616', 'stroke="#189018"') +
			this.poly('167,79 167,200 175,159 237,483 246,419 308,651 572,256 882,515 1113,213', blue) +
			this.poly('1104,213 1113,286 1129,254 1147,522 1342,373 1634,651', blue) +
			dots + labels +
			`<path d="M0 ${y(411)}H${this.plot}" stroke="#007f00" stroke-width="4"/>
			<rect x=".5" y="${y(396) + .5}" width="38" height="12" fill="#fff" stroke="#007f00"/>
			<text x="2" y="${y(406)}" fill="#2c7a10">1,62600</text>
			<text x="10" y="${y(59)}" font-size="24" fill="#000">Q</text>
			<text x="10" y="${y(87)}" font-size="24" fill="#000">GBP/USD</text>
			<text x="2" y="${y(677)}" font-weight="400" fill="#111">IT-Finance.com - Tiempo Real</text>`;
	}
	axis() {
		let out = '';
		for (let i = 0; i <= 15; i++) {
			if (i === 3) continue;
			out += this.tag(664 - i * 40.46, String((10 + i) / 10).replace('.', ','), '#111');
		}
		return `<g font-size="10">${out}</g>` + this.tag(532, '1,31247', '#2c8a10', true) + this.tag(541, '1,30486', '#a07010', true) + this.tag(549, '1,29964', '#b01010', true);
	}
}
customElements.define('price-pane', PricePane);

class TrainPane extends ChartPane {
	constructor() {
		super();
		this.top = 0;
		this.bottom = 305;
		this.grow = 304;
	}
	draw() {
		const end = this.px(1749), y = v => this.y(v);
		const lagged = TRAIN.map((p, i) => [p[0], i ? (p[1] + TRAIN[i - 1][1]) / 2 : p[1]]);
		const over = (s, v, sign) => s.map(([q, n]) => [q, sign > 0 ? Math.max(n, v) : Math.min(n, v)]);
		const flat = (s, v) => s.map(([q]) => [q, v]);
		return `<rect y="${y(25)}" width="${end}" height="${y(79) - y(25)}" fill="#d9f5d9"/>
			<rect y="${y(238)}" width="${end}" height="${y(292) - y(238)}" fill="#ffdcdc"/>` +
			this.between(TREND, TREND_AVG, 'rgba(60,60,200,.3)', 'rgba(220,90,220,.4)') +
			this.between(over(TREND, 238, 1), flat(TREND, 238), 'none', 'rgba(150,50,40,.5)') +
			this.between(over(TREND, 79, -1), flat(TREND, 79), 'rgba(0,110,40,.5)', 'none') +
			this.between(TRAIN, lagged, 'rgba(70,200,70,.4)', 'rgba(230,70,70,.35)') +
			[25, 79, 238, 292].map(v => this.hline(v, 'stroke="#000"')).join('') +
			this.hline(157, 'stroke="#0000b8" stroke-width="2" stroke-dasharray="6 4"') +
			this.path(lagged, 'stroke="#222" stroke-dasharray="4 3"') +
			this.segments(TRAIN, 1.6, (a, b) => a[1] > b[1] ? '#e02020' : '#000') +
			this.segments(TREND, 4, (a, b) => a[1] > b[1] ? '#ff0000' : '#000098') +
			this.path(TREND_AVG, 'stroke="#222" stroke-width="3" stroke-dasharray="5 5"') +
			this.marks('6,50 12,65 24,263 34,55 38,62 41,52 52,97 58,147 63,255 70,97 78,95 83,90 89,206 92,230 100,47 104,47 109,77 119,50 128,200 134,128 137,140 139,136 146,53 162,136 174,65 187,77', '#b00000', false, 5) +
			this.marks('9,90 19,287 28,273 36,67 39,67 48,228 55,190 62,260 65,257 75,163 79,115 86,220 91,232 95,235 103,58 107,80 113,235 125,260 130,210 136,143 138,143 142,190 156,268 167,232 180,208 190,97', '#0000b8', true, 5);
	}
	axis() {
		const t = (v, s, c, b) => this.tag(v, s, c, b);
		return t(73, '84,854', '#111', true) + t(197, '29,228', '#0000a0', true) + t(223, '25,965', '#111', true) + t(25, '100', '#111', true) +
			t(95, '80', '#111', true) + t(128, '60', '#111') + t(157, '50', '#0000b8', true) + t(243, '20', '#111', true) + t(284, '0', '#111', true);
	}
}
customElements.define('train-pane', TrainPane);

class WillyPane extends ChartPane {
	constructor() {
		super();
		this.top = 305;
		this.bottom = 524;
		this.grow = 218;
	}
	draw() {
		const colours = { r: '#980000', b: '#0000c8', o: '#ff9800', g: '#00c800' };
		const line = WILLY.map(p => [p[0], p[1]]);
		const clamp = (v, f) => line.map(([q, n]) => [q, f(n, v)]);
		const flat = v => line.map(([q]) => [q, v]);
		return this.bands(WILLY_BANDS) +
			this.between(clamp(467, Math.max), flat(467), 'none', 'rgba(128,20,20,.45)') +
			this.between(clamp(371, Math.min), flat(371), 'rgba(60,150,60,.45)', 'none') +
			[322, 514].map(v => this.hline(v, 'stroke="#000" stroke-dasharray="5 3"')).join('') +
			this.hline(371, 'stroke="#8c8ce0" stroke-width="3"') + this.hline(371, 'stroke="#000080"') +
			this.hline(467, 'stroke="#ff8080" stroke-width="3"') + this.hline(467, 'stroke="#c00000"') +
			this.hline(419, 'stroke="#000090" stroke-width="2" stroke-dasharray="5 4"') +
			this.segments(line, 4, (a, b, i) => colours[WILLY[i][2]]) +
			this.marks('38,420 42,420 49,420 64,420 74,420 98,420 185,420 188,420', '#0000a8', true, 6) +
			this.marks('40,417 43,417 58,417 68,417 75,417 122,417 186,417', '#b00000', false, 6);
	}
	axis() {
		const t = (v, s, c) => this.tag(v, s, c, true);
		return t(364, '-25', '#000090') + t(391, '-36,403', '#0000a0') + t(326, '0', '#111') + t(424, '-50', '#000090') + t(467, '-75', '#c00000') + t(502, '-100', '#111');
	}
}
customElements.define('willy-pane', WillyPane);

class AwesomePane extends ChartPane {
	constructor() {
		super();
		this.top = 524;
		this.bottom = 743;
		this.grow = 218;
	}
	bars(s, colour, attrs) {
		return s.slice(1).map(([q, v], i) =>
			`<rect x="${this.qx(q) - 3}" y="${this.y(Math.min(v, 623))}" width="6" height="${Math.abs(this.y(v) - this.y(623))}" fill="${colour(v, v > s[i][1])}" ${attrs}/>`
		).join('');
	}
	draw() {
		return this.hline(723, GRID, this.plot) +
			this.bars(AO_AVG, (v, falling) => falling ? '#ffd0d0' : '#d0ffd0', 'stroke="#b09090" stroke-opacity=".4"') +
			this.bars(AO, (v, falling) => v < 623 ? (falling ? '#ff00ff' : '#0000ff') : (falling ? '#ff0000' : '#009090'), 'stroke="#222" stroke-opacity=".25"') +
			this.hline(623, 'stroke="#7070ff" stroke-width="3"') + this.hline(623, 'stroke="#0000c8"') +
			this.segments(AO, 4, (a, b) => a[1] > b[1] ? '#b000b0' : '#000030') +
			this.segments(AO_AVG, 4, (a, b) => a[1] > b[1] ? '#ff9000' : '#64ff64') +
			`<rect x="${this.px(1748)}" y="${this.y(606)}" width="5" height="${this.y(623) - this.y(606)}" fill="#f0f"/>` +
			this.marks('29,712 50,600 66,652 97,645 132,660 150,636 158,666 180,644', '#00f0ff', true, 5) +
			this.marks('45,597 52,585 85,622 110,587 149,636 152,645 178,640', '#ffee00', false, 5);
	}
	axis() {
		return this.tag(591, '0,0708', '#a000a0', true) + this.tag(620, '0,0191', '#50e050', true) + this.tag(641, '0', '#f0f', true) + this.tag(723, '-0,5', '#111');
	}
}
customElements.define('awesome-pane', AwesomePane);

class ForcePane extends ChartPane {
	constructor() {
		super();
		this.top = 743;
		this.bottom = 946;
		this.grow = 200;
	}
	draw() {
		return `<rect x="1" width="${this.px(1753) - 1}" height="100%" fill="#ffff88"/>` + this.bands(FORCE_BANDS) +
			this.hline(760, 'stroke="#999" stroke-opacity=".3" stroke-dasharray="1 3"', this.plot) +
			this.hline(851, 'stroke="#000"');
	}
	axis() {
		return this.tag(758, '0,505', '#111') + this.tag(851, '0,5000', '#111', true) + this.tag(932, '0,495', '#111');
	}
}
customElements.define('force-pane', ForcePane);

class YearAxis extends ChartPane {
	connectedCallback() {
		super.connectedCallback();
		this.style.flex = '0 0 15px';
		this.shadowRoot.querySelector('.tabs').style.display = 'none';
	}
	render() {
		this.plot = this.getBoundingClientRect().width - AXIS;
		this.sx = this.plot / 1849;
		let out = '';
		for (let i = 0; i <= 25; i++) {
			const x = this.qx(i * 8);
			out += `<path d="M${Math.round(x) + .5} 0v3" stroke="${GREY}"/><text x="${x}" y="12" text-anchor="middle" fill="#111">${1978 + i * 2}</text>`;
		}
		this.shadowRoot.querySelector('svg').innerHTML = out;
	}
}
customElements.define('year-axis', YearAxis);

// title tab of a pane, with its small colour swatches
class PaneTab extends HTMLElement {
	connectedCallback() {
		const colours = (this.getAttribute('swatch') || '').split(' ').filter(Boolean);
		const swatch = `<span class="sw${colours.length ? '' : ' empty'}">${colours.map(c => `<i style="background:${c}"></i>`).join('')}</span>`;
		this.attachShadow({ mode: 'open' }).innerHTML = `
			<style>
				:host { display: block; border-right: 1px solid ${GREY}; }
				:host(:last-child) { border-right: 0; }
				button { display: flex; align-items: center; gap: 4px; height: 15px; margin: 0; padding: 0 4px 0 3px; border: 0; background: none; font: inherit; color: inherit; white-space: nowrap; }
				.sw { display: flex; width: 8px; height: 8px; }
				.sw.empty { width: 6px; height: 6px; border: 1px solid #789; }
				i { flex: 1; }
			</style>
			<button>${this.hasAttribute('bare') ? '' : swatch}<slot></slot></button>
		`;
	}
}
customElements.define('pane-tab', PaneTab);

class TradeWorkspace extends HTMLElement {
	connectedCallback() {
		this.attachShadow({ mode: 'open' }).innerHTML = `
			<style>
				:host { display: flex; flex-direction: column; height: 100vh; }
				.middle { flex: 1; min-height: 0; display: flex; }
				.panes { flex: 1; min-width: 0; display: flex; flex-direction: column; }
				pane-tab { --icon: 10px; }
			</style>
			<top-bar></top-bar>
			<div class="middle">
				<tool-rail></tool-rail>
				<div class="panes">
					<price-pane>
						<pane-tab bare><ui-icon name="redDown"></ui-icon><ui-icon name="greenUp"></ui-icon></pane-tab>
						<pane-tab>Precio</pane-tab>
						<pane-tab bare><ui-icon name="list"></ui-icon></pane-tab>
						<pane-tab>Cierre (W)</pane-tab>
						<pane-tab swatch="#6f8591">Tunel Domenec v4 (t t t t t)</pane-tab>
						<pane-tab swatch="#f00 #000 #0c0 #f0f">Control Total Doc v.6</pane-tab>
						<pane-tab swatch="#000">Multi Avisos (3 f 3 1,5 70 f f)</pane-tab>
					</price-pane>
					<train-pane><pane-tab swatch="#6f8591 #000">Sistema de trenes Doc v4 (f f)</pane-tab></train-pane>
					<willy-pane><pane-tab swatch="#6f8591">Willy Doc (t)</pane-tab></willy-pane>
					<awesome-pane><pane-tab swatch="#6f8591">Awesome Evolution Doc</pane-tab></awesome-pane>
					<force-pane><pane-tab swatch="#000 #6f8591">Barra Fuerza Fondo Mercado v4 (f)</pane-tab></force-pane>
					<year-axis></year-axis>
				</div>
			</div>
			<bottom-bar></bottom-bar>
		`;
	}
}
customElements.define('trade-workspace', TradeWorkspace);
</script>
</body>
</html>
